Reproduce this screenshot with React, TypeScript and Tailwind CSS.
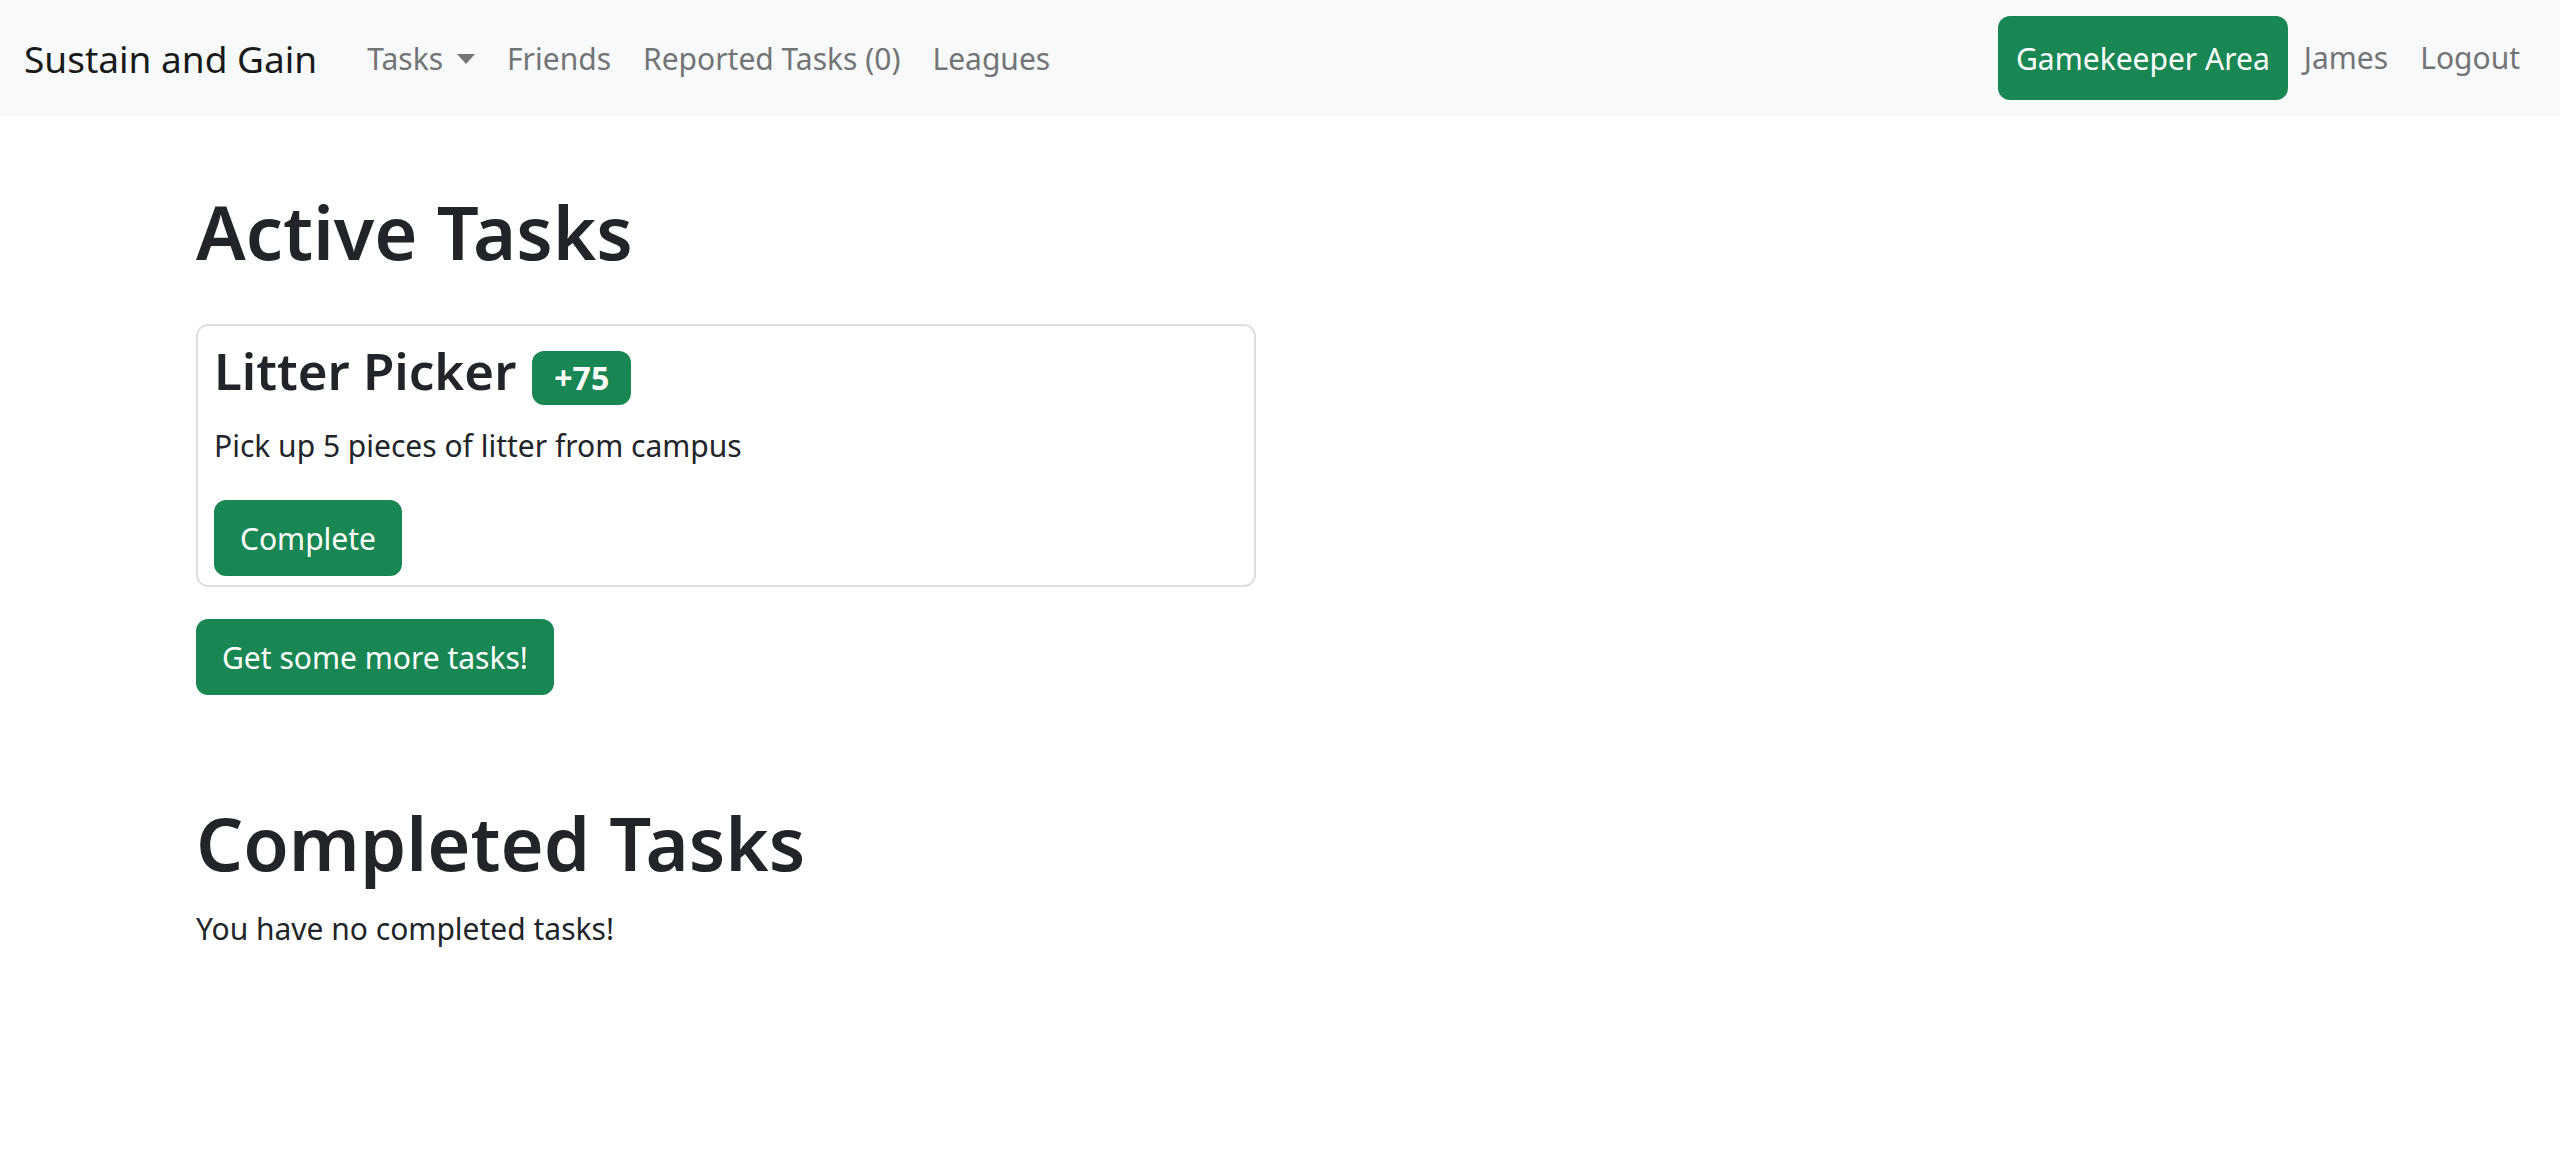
import type { ReactNode } from "react";

const navLinks = ["Friends", "Reported Tasks (0)", "Leagues"];

function NavLink({ children }: { children: ReactNode }) {
  return (
    <a href="#" className="px-4 text-[#737475]">
      {children}
    </a>
  );
}

function GreenButton({ children }: { children: ReactNode }) {
  return (
    <button type="button" className="rounded-xl bg-[#198754] px-[26px] pt-[15px] pb-[13px] text-white">
      {children}
    </button>
  );
}

function Navbar() {
  return (
    <nav className="flex flex-wrap items-center bg-[#f8f9fa] px-6 py-4">
      <a href="#" className="mr-[34px] pt-[2px] text-[37px] leading-[60px] text-[#181919]">
        Sustain and Gain
      </a>
      <div className="flex items-center pt-[2px]">
        <button type="button" aria-haspopup="menu" className="flex items-center px-4 text-[#737475]">
          Tasks
          <svg viewBox="0 0 18 10" className="ml-[14px] h-[10px] w-[18px]" fill="currentColor" aria-hidden="true">
            <path d="M0 0H18L9 10Z" />
          </svg>
        </button>
        {navLinks.map((label) => (
          <NavLink key={label}>{label}</NavLink>
        ))}
      </div>
      <div className="ml-auto flex items-center">
        <a href="#" className="rounded-xl bg-[#198754] px-[18px] pt-[19px] pb-[17px] text-white">
          Gamekeeper Area
        </a>
        <NavLink>James</NavLink>
        <NavLink>Logout</NavLink>
      </div>
    </nav>
  );
}

export default function App() {
  return (
    <div className="min-h-screen bg-white font-['Noto_Sans',sans-serif] text-[30px] leading-[48px] text-[#212529]">
      <Navbar />
      <main className="px-[196px] pt-[68px]">
        <section>
          <h1 className="text-[74px] leading-[96px] font-semibold">Active Tasks</h1>
          <div className="mt-11 grid grid-cols-2 gap-12">
            <article className="rounded-xl border-2 border-[#dfdfdf] px-4 pt-[10px] pb-[9px]">
              <h2 className="flex h-[68px] items-baseline gap-4 text-[51px] leading-[68px] font-semibold">
                Litter Picker
                <span className="rounded-xl bg-[#198754] px-[22px] py-[3px] text-[32px] leading-[48px] font-bold text-white">
                  +75
                </span>
              </h2>
              <p className="mt-[18px] mb-[30px]">Pick up 5 pieces of litter from campus</p>
              <GreenButton>Complete</GreenButton>
            </article>
          </div>
          <div className="mt-8">
            <GreenButton>Get some more tasks!</GreenButton>
          </div>
        </section>
        <section className="mt-[100px]">
          <h1 className="text-[74px] leading-[96px] font-semibold">Completed Tasks</h1>
          <p className="mt-[14px]">You have no completed tasks!</p>
        </section>
      </main>
    </div>
  );
}
